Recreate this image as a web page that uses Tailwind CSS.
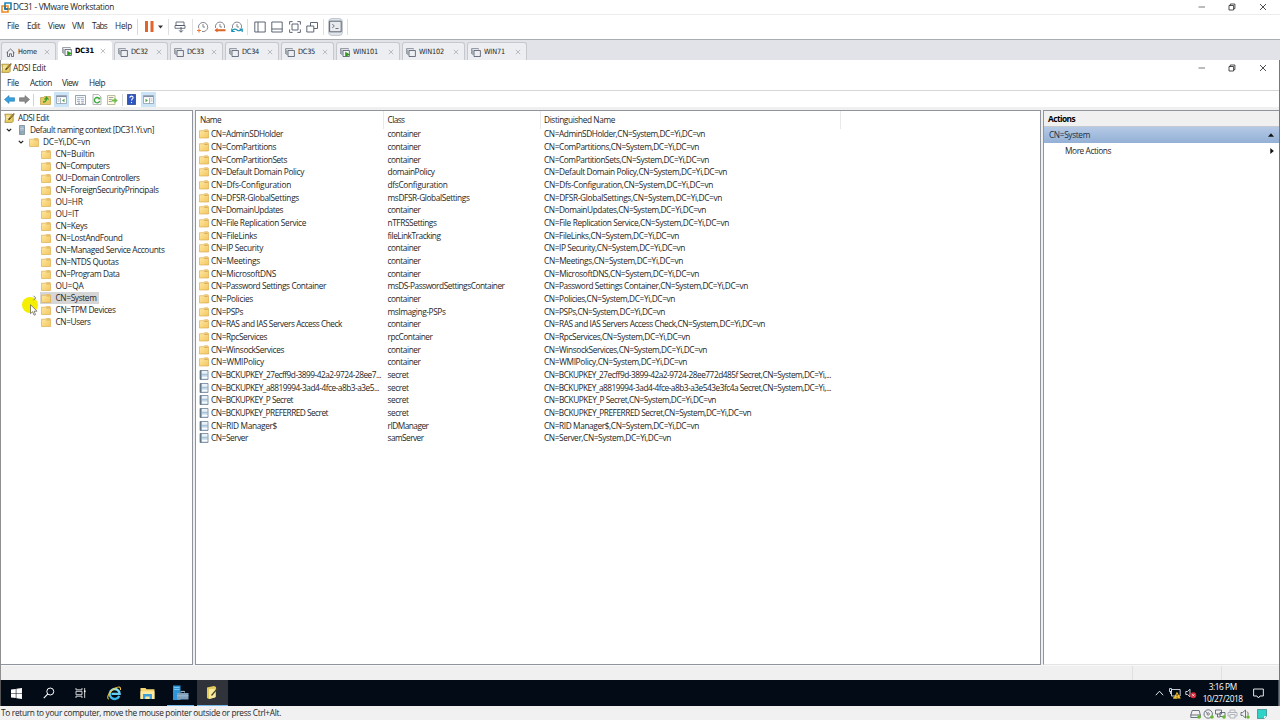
<!DOCTYPE html>
<html lang="en">
<head>
<meta charset="utf-8">
<title>DC31 - VMware Workstation</title>
<script src="https://cdn.jsdelivr.net/npm/@tailwindcss/browser@4"></script>
</head>
<body class="w-[1280px] h-[720px] overflow-hidden bg-white text-[#262626] font-['Open_Sans','Noto_Sans',sans-serif] text-[8.3px] leading-none whitespace-nowrap">
<svg class="absolute size-0">
  <defs>
    <linearGradient id="gf" x1="0" y1="0" x2="1" y2="1"><stop offset="0" stop-color="#ffe9a6"/><stop offset="1" stop-color="#f3c75e"/></linearGradient>
    <linearGradient id="ie" x1="0" y1="0" x2="0" y2="1"><stop offset="0" stop-color="#8fe6fb"/><stop offset="1" stop-color="#35b5e8"/></linearGradient>
  </defs>
  <symbol id="folder" viewBox="0 0 10 9"><path d="M.5 1.2H4.8l.5-.9h3.6l.6.9V8.5H.5z" fill="url(#gf)" stroke="#d6a544" stroke-width=".6"/><path d="M5.4 1.9h3.3" stroke="#b8873a" stroke-width=".6"/></symbol>
  <symbol id="leaf" viewBox="0 0 10 10"><path d="M1 .5h8v9H1z" fill="#d5e6f1" stroke="#6d8195" stroke-width=".8"/><path d="M1.8.5v9" stroke="#5c6f82" stroke-width="1.4"/><path d="M3 2h5.4M3 7.6h5.4" stroke="#fff" stroke-width="1"/><path d="M3 4.8h5.4" stroke="#8fadc8" stroke-width=".9"/></symbol>
  <symbol id="adsi" viewBox="0 0 11 10"><path d="M.8 1.2h7.4l1 1v6.2l-1 1H.8l.8-4z" fill="#e8cf63" stroke="#8b6d1c" stroke-width=".6"/><path d="M2 3h4M2 4.6h3M2 6.2h2.4" stroke="#fff8cf" stroke-width=".7"/><path d="M10.2.6 4.6 6.8" stroke="#4b3d1f" stroke-width="1.4"/><path d="M10.2.6 6 5.2" stroke="#d89a3c" stroke-width=".7"/></symbol>
  <symbol id="server" viewBox="0 0 6 10"><path d="M.5.5h5v9h-5z" fill="#8fa5b8" stroke="#5d7083" stroke-width=".6"/><path d="M1.2 2h3.6M1.2 3.5h3.6M1.2 5h3.6" stroke="#e4edf4" stroke-width=".6"/><circle cx="4" cy="8" r=".6" fill="#9fe06b"/></symbol>
  <symbol id="down" viewBox="0 0 6 6"><path d="M.8 1.8 3 4l2.2-2.2" fill="none" stroke="#222" stroke-width="1.2"/></symbol>
  <symbol id="vm" viewBox="0 0 10 9"><path d="M.6 6V.6h6.8v.8M1.800 7V1.800" fill="none" stroke="#666d78" stroke-width=".7"/><path d="M3 2.500h6.400v6H3z" fill="#eceef2" stroke="#4d5666" stroke-width=".8"/></symbol>
  <symbol id="vmon" viewBox="0 0 10 9"><path d="M.6 6V.6h7.800v.8M1.800 7V1.800" fill="none" stroke="#666d78" stroke-width=".7"/><path d="M3 2.500h6.400v6H3z" fill="#f4f6f8" stroke="#4d5666" stroke-width=".8"/><path d="M5.200 3.800 10 6.400 5.200 9z" fill="#2d9a1e"/></symbol>
  <symbol id="x" viewBox="0 0 6 6"><path d="m.8.8 4.400 4.400M5.200.8.8 5.200" stroke="#a4a6ab" stroke-width=".7"/></symbol>
  <symbol id="min" viewBox="0 0 8 8"><path d="M.5 4h6.500" stroke="#555" stroke-width=".8"/></symbol>
  <symbol id="restore" viewBox="0 0 8 8"><path d="M1 2.500h4.600V7H1zM2.300 2.300V1h4.600v4.700H5.800" fill="none" stroke="#222" stroke-width=".8"/></symbol>
  <symbol id="close" viewBox="0 0 8 8"><path d="m1 1 6 6M7 1 1 7" stroke="#222" stroke-width=".8"/></symbol>
</svg>

<!-- VMware title bar -->
<header class="h-[15px] flex items-center pl-0.5 border-b border-[#ececec]">
  <svg class="size-[11px] -ml-px mr-px" viewBox="0 0 11 11"><path d="M4 1h6v6H4z" fill="none" stroke="#1c86b5" stroke-width="1.600"/><path d="M1 4h6v6H1z" fill="none" stroke="#f08a1d" stroke-width="1.600"/><path d="M4 3.200V7h3.200" fill="none" stroke="#1c6f9b" stroke-width="1.400"/></svg>
  <span class="w-[1185px]" data-w="101">DC31 - VMware Workstation</span>
  <svg class="size-2"><use href="#min"/></svg><svg class="size-2 ml-[22px]"><use href="#restore"/></svg><svg class="size-2 ml-[23px]"><use href="#close"/></svg>
</header>

<!-- VMware menu and toolbar -->
<nav class="h-[25px] flex items-center pl-[7px] pb-px border-b border-[#a9adb0]">
  <span class="w-5" data-w="12">File</span><span class="w-[21px]" data-w="13">Edit</span><span class="w-6" data-w="17">View</span><span class="w-5" data-w="12">VM</span><span class="w-[23px]" data-w="15">Tabs</span><span class="w-[22px]" data-w="17">Help</span>
  <i class="w-px h-4 bg-[#d9d9d9]"></i>
  <svg class="w-[9px] h-[11px] ml-[7px]" viewBox="0 0 9 11"><path d="M0 0h3v11H0zM5.500 0h3v11h-3z" fill="#e0642b"/></svg>
  <svg class="w-[5px] h-1 ml-1" viewBox="0 0 5 4"><path d="M0 .5h5L2.500 3.500z" fill="#333"/></svg>
  <i class="w-px h-4 bg-[#e0e0e0] ml-[5px]"></i>
  <svg class="size-3 ml-[5px]" viewBox="0 0 12 12"><path d="M2 1h8v3.500H2zM1 4.500h10v2.800H1z" fill="#fff" stroke="#4d5666" stroke-width=".8"/><path d="M7 6v5M5 9.300l2 2 2-2" fill="none" stroke="#4d5666" stroke-width=".9"/></svg>
  <i class="w-px h-4 bg-[#e0e0e0] ml-1.5"></i>
  <svg class="size-3 ml-1" viewBox="0 0 12 12"><path d="M1.600 7A4.600 4.600 0 1 1 5 10.500M6 3v3.100h2" fill="none" stroke="#646b75" stroke-width=".8"/><path d="M2 7.500v4M0 9.500h4" stroke="#e77a3f" stroke-width="1.100"/></svg>
  <svg class="size-3 ml-[5px]" viewBox="0 0 12 12"><path d="M1.600 7A4.600 4.600 0 1 1 10.400 7M6 3v3h2" fill="none" stroke="#646b75" stroke-width=".8"/><path d="m.5 9.200 3-2.400v1.500h8v1.900h-8v1.400z" fill="#dc6424"/></svg>
  <svg class="size-3 ml-[5px]" viewBox="0 0 12 12"><path d="M1.600 7A4.600 4.600 0 1 1 10.400 7M6 3v3h2" fill="none" stroke="#646b75" stroke-width=".8"/><path d="M.8 7.500v3h3M1 10.200c1.500-2.600 3.500-2.400 5-1.200s3.500 1 5-1.200M11.200 11V8H8.500" fill="none" stroke="#1e8fb5" stroke-width="1.200"/></svg>
  <i class="w-px h-4 bg-[#e0e0e0] ml-1"></i>
  <svg class="size-3 ml-[6px]" viewBox="0 0 12 12"><path d="M.8 1h10.400v10H.8zM4 1v10" fill="none" stroke="#4d5666" stroke-width=".9"/></svg>
  <svg class="size-3 ml-[5px]" viewBox="0 0 12 12"><path d="M.8 1h10.400v10H.8zM.8 8h10.400" fill="none" stroke="#4d5666" stroke-width=".9"/></svg>
  <svg class="size-3 ml-[6px]" viewBox="0 0 12 12"><path d="M.6 3.600v-3h3M8.400.6h3v3M11.400 8.400v3h-3M3.600 11.400h-3v-3M3 3h6v6H3z" fill="none" stroke="#4d5666" stroke-width=".9"/></svg>
  <svg class="size-3 ml-[5px]" viewBox="0 0 12 12"><path d="M4.500 5V1.500h7v6H8M.8 5h7v6h-7z" fill="none" stroke="#4d5666" stroke-width=".9"/></svg>
  <i class="w-px h-4 bg-[#e0e0e0] ml-[5px]"></i>
  <span class="w-[15px] h-[18px] ml-1 bg-[#dfe3ea] border border-[#c3c8d0] rounded-sm flex items-center justify-center"><svg class="size-[13px] shrink-0" viewBox="0 0 13 13"><path d="M.6 1.200h11.600v10.600H.6z" fill="#e9ebef" stroke="#4d5666" stroke-width=".9"/><path d="m3.300 4 2 2-2 2M6.500 8.500h3" fill="none" stroke="#4d5666" stroke-width=".8"/></svg></span>
  <i class="w-px h-4 bg-[#e0e0e0] ml-1"></i>
</nav>

<!-- Virtual machine tabs -->
<div id="tabs" class="h-5 flex items-end gap-0.5 bg-[#e1e3e8] pl-px font-['DejaVu_Sans_Condensed','DejaVu_Sans',sans-serif] text-[7.3px]"></div>

<!-- Remote desktop of the machine -->
<main class="h-[620px] border-l border-r border-l-[#8f8f8f] border-r-[#777] bg-[#f0f0f0] relative">
  <div class="h-[17px] pb-px bg-white flex items-center">
    <svg class="w-[11px] h-2.5 mr-px"><use href="#adsi"/></svg>
    <span class="w-[1185px]" data-w="33">ADSI Edit</span>
    <svg class="size-2"><use href="#min"/></svg><svg class="size-2 ml-[22px]"><use href="#restore"/></svg><svg class="size-2 ml-[23px]"><use href="#close"/></svg>
  </div>
  <div class="h-[14px] bg-white flex items-center pl-1.5 border-b border-[#d6d6d6]">
    <span class="w-[23px]" data-w="12">File</span><span class="w-[32px]" data-w="22">Action</span><span class="w-[27px]" data-w="16">View</span><span data-w="16">Help</span>
  </div>
  <div class="h-4 bg-white flex items-center pl-[3px] pt-px">
    <svg class="w-[11px] h-[9px]" viewBox="0 0 11 9"><path d="M.5 4.500 5 .6v2.200h5.500v3.400H5v2.200z" fill="#36a3e0" stroke="#2478b0" stroke-width=".6"/></svg>
    <svg class="w-[11px] h-[9px] ml-[4px]" viewBox="0 0 11 9"><path d="M10.500 4.500 6 .6v2.200H.5v3.400H6v2.200z" fill="#8b8b8b" stroke="#666" stroke-width=".6"/></svg>
    <i class="w-px h-3 bg-[#d4d4d4] ml-[3px]"></i>
    <svg class="w-[11px] h-[10px] ml-[6px]" viewBox="0 0 11 10"><path d="M.5 2.500h3l1-1h6v8H.5z" fill="#e6c865" stroke="#b39138" stroke-width=".6"/><path d="M3 7c2 0 3.500-1 3.500-3.500M4.500 4.600l2-2.400 2 2.400" fill="none" stroke="#35a02c" stroke-width="1.300"/></svg>
    <span class="w-[15px] h-[15px] ml-[3px] bg-[#cce4f7] flex items-center justify-center"><svg class="w-[11px] h-[9px]" viewBox="0 0 11 9"><path d="M.5.5h10v8H.5z" fill="#fff" stroke="#8292a4" stroke-width=".7"/><path d="M.5 1.500h10" stroke="#8292a4" stroke-width="1.200"/><path d="M4.500 3v5.500M1.500 4h2M1.500 6h2" stroke="#8292a4" stroke-width=".7"/><path d="M8.500 3.800v3.400L6 5.500z" fill="#4ea53e"/></svg></span>
    <svg class="w-[11px] h-[10px] ml-[6px]" viewBox="0 0 11 10"><path d="M.5.5h10v9H.5z" fill="#f7f8fa" stroke="#7e8b99" stroke-width=".8"/><path d="M2 2.600h7M2 4.600h3M6 4.600h3M2 6.400h3M6 6.400h3" stroke="#8fa1b8" stroke-width=".8"/><path d="M3 8.200h2M6.500 8.200h2" stroke="#666" stroke-width=".7"/></svg>
    <svg class="w-[10px] h-[11px] ml-[6px]" viewBox="0 0 10 11"><path d="M1 .5h5.500L9 3v7.500H1z" fill="#fbfbfb" stroke="#9a9a9a" stroke-width=".7"/><path d="M7.300 4.600A2.700 2.700 0 1 0 7.700 7" fill="none" stroke="#38a838" stroke-width="1.300"/><path d="m5.600 5.300 2.800.300V2.900z" fill="#38a838"/></svg>
    <svg class="w-[11px] h-[10px] ml-[5px]" viewBox="0 0 11 10"><path d="M.5.5H8v9H.5z" fill="#fffbe0" stroke="#a4a17c" stroke-width=".7"/><path d="M1.800 2.500h4.500M1.800 4.500h3M1.800 6.500h3" stroke="#889" stroke-width=".8"/><path d="M4.800 4.500h2.700V2.700L10.800 5.500 7.500 8.200V6.500H4.800z" fill="#6bc04b"/></svg>
    <i class="w-px h-3 bg-[#d4d4d4] ml-1"></i>
    <svg class="w-[9px] h-[11px] ml-[4px]" viewBox="0 0 9 11"><path d="M.4.400h8.200v10.200H.4z" fill="#2f55c0" stroke="#1d377e" stroke-width=".7"/><path d="M2.900 3.700c0-2.200 3.400-2 3.200 0-.1 1.200-1.600 1.300-1.600 2.900M4.500 7.900v1.200" fill="none" stroke="#fff" stroke-width="1.100"/></svg>
    <span class="w-[15px] h-[15px] ml-[5px] bg-[#cce4f7] flex items-center justify-center"><svg class="w-[11px] h-[9px]" viewBox="0 0 11 9"><path d="M.5.500h10v8H.5z" fill="#fff" stroke="#8292a4" stroke-width=".7"/><path d="M.5 1.500h10" stroke="#8292a4" stroke-width="1.200"/><path d="M6.500 3v5.500M7.500 4h2M7.500 6h2" stroke="#8292a4" stroke-width=".7"/><path d="M2.500 3.800v3.400L5 5.500z" fill="#4ea53e"/></svg></span>
  </div>

  <div class="h-[558px] pt-[3px] flex gap-[2px]">
    <section id="tree" class="w-[192px] h-[555px] bg-white border border-l-0 border-[#8f949d] pt-px"></section>
    <section class="w-[846px] h-[555px] bg-white border border-[#8f949d]">
      <div class="h-[17px] flex items-center leading-[18px]">
        <span class="w-[188px] pl-1 border-r border-[#e9e9e9]"><b class="font-normal" data-w="21">Name</b></span>
        <span class="w-[157px] pl-[3.500px] border-r border-[#e9e9e9]"><b class="font-normal" data-w="17">Class</b></span>
        <span class="w-[300px] pl-[3px] border-r border-[#e9e9e9]"><b class="font-normal" data-w="71">Distinguished Name</b></span>
      </div>
      <div id="list"></div>
    </section>
    <section class="w-[236px] h-[555px] bg-white border border-r-0 border-[#8f949d] border-b-[#e4e4e4]">
      <div class="h-[16px] bg-[#f0f0f0] border-b border-[#c5cad2] flex items-center pl-[4px] pt-px font-bold text-black"><span data-w="27" data-font="bold 8.3px 'Open Sans'">Actions</span></div>
      <div class="h-4 bg-linear-to-b from-[#b4c9e5] to-[#94b0d6] flex items-center justify-between pl-[5px] pr-[5px] text-[#222e3e]"><span data-w="41">CN=System</span><svg class="w-1.5 h-1" viewBox="0 0 6 4"><path d="M0 3.800h6L3 .3z" fill="#111"/></svg></div>
      <div class="h-4 flex items-center justify-between pl-[21px] pr-[5px]"><span data-w="46">More Actions</span><svg class="w-1 h-1.5" viewBox="0 0 4 6"><path d="M.3 0v6L3.800 3z" fill="#111"/></svg></div>
    </section>
  </div>

  <div class="h-[15px] flex justify-end border-t border-[#f8f8f8]"><i class="w-[89px] border-l border-[#e0e0e0]"></i><i class="w-[58px] border-l border-[#e0e0e0]"></i></div>

  <!-- Pointer with its highlight -->
  <div class="absolute left-[21px] top-[237px] size-4 rounded-full bg-[#f4ee00]"></div>
  <svg class="absolute left-[31px] top-[235px] size-[6px]" viewBox="0 0 6 6"><path d="M1.500.800 3.700 3 1.500 5.200" fill="none" stroke="#666" stroke-width=".9"/></svg>
  <svg class="absolute left-[29px] top-[244px] w-2 h-3" viewBox="0 0 8 12"><path d="M.5.700v9l2.100-2 1.500 3.500 1.400-.600L4.100 7.200H7z" fill="#fff" stroke="#555" stroke-width=".7"/></svg>
</main>

<!-- Windows taskbar -->
<div class="h-[26px] bg-[#030b16] border-l border-r border-l-[#555] border-r-[#777] flex items-center text-white">
  <svg class="size-[11px] ml-[10px]" viewBox="0 0 11 11"><path d="M0 1.600 4.800.900v4.300H0zM5.400.800 11 0v5.200H5.400zM0 5.800h4.800v4.300L0 9.400zM5.400 5.800H11V11l-5.600-.800z" fill="#fff"/></svg>
  <svg class="size-3 ml-[21px]" viewBox="0 0 12 12"><circle cx="7.300" cy="4.500" r="3.500" fill="none" stroke="#fff"/><path d="M4.800 7 .8 11.200" stroke="#fff" stroke-width="1.100"/></svg>
  <svg class="size-3 ml-5" viewBox="0 0 12 12"><path d="M1 1v1.800h6V1M1 11V9.200h6V11M1 4.300h6v3.400H1zM9.700 1v10" fill="none" stroke="#e8e8e8" stroke-width=".9"/><path d="M9 3.500h1.600v1.600H9z" fill="#fff"/></svg>
  <svg class="w-[15px] h-[15px] ml-5" viewBox="0 0 15 15"><path d="M12.300 10A5 5 0 1 1 12.700 7.800H4.500" fill="none" stroke="url(#ie)" stroke-width="2.300"/><path d="M1.600 13.400C-1 11 3 5 7.500 2.500S14 .600 13.500 4" fill="none" stroke="#f2c53b" stroke-width="1.100"/></svg>
  <svg class="w-[15px] h-[13px] ml-[18px]" viewBox="0 0 15 13"><path d="M.500 1h5l1 1.300h8V12H.500z" fill="#f8d673"/><path d="M.500 4.300h14V12H.500z" fill="#fde9a0"/><path d="M3 12V7h9v5H9.700V9.500H5.300V12z" fill="#3ba0dc"/></svg>
  <span class="w-[27px] h-[26px] ml-3 border-b border-[#76b9ed] flex items-center justify-center"><svg class="w-[17px] h-4" viewBox="0 0 17 16"><path d="M1 .500h7.500V15H1z" fill="#2c96d8"/><path d="M2 2.500h5.500M2 4.500h5.500" stroke="#8dd0f5" stroke-width=".8"/><path d="M9 7.500V6.400h3.500v1.100" fill="none" stroke="#a9bfd0"/><path d="M5 8h11.500v6.500H5z" fill="#7f9fbb"/><path d="M5 10.800h11.500" stroke="#b9cedd" stroke-width=".6"/></svg></span>
  <span class="w-[32px] h-[26px] ml-[3px] bg-[#30343a] border-b border-[#76b9ed] flex items-center justify-center"><svg class="w-[13px] h-[15px]" viewBox="0 0 13 15"><path d="M1 2.500 8 1l2 1v10l-7 2-2-1z" fill="#e3c95a"/><path d="M3 4h6v8.500L3 14z" fill="#f7ea9f"/><path d="M12.300 2.500 5.500 10.500" stroke="#4a4425" stroke-width="1.200"/></svg></span>
  <svg class="w-[9px] h-[6px] ml-[927px]" viewBox="0 0 9 6"><path d="M.800 5.200 4.500 1.200l3.700 4" fill="none" stroke="#fff" stroke-width=".9"/></svg>
  <svg class="w-[12px] h-[11px] ml-[5px]" viewBox="0 0 12 11"><path d="M2.500 1.500h8.700V8H2.500zM4 10h4M.500.500h2v3h-2zM1.500 3.500V6" fill="none" stroke="#dfe5ea" stroke-width=".9"/><path d="M8 3.800 11.800 10.600H4.400z" fill="#f8bf2c"/><path d="M8.100 6v2.300M8.100 9v.8" stroke="#222" stroke-width=".8"/></svg>
  <svg class="w-[12px] h-[11px] ml-[4px]" viewBox="0 0 12 11"><path d="M.800 3.500h1.700L5 1.200v7.600L2.500 6.500H.800z" fill="none" stroke="#fff" stroke-width=".8"/><circle cx="8.300" cy="7.300" r="3" fill="#dc2633"/><path d="m7.200 6.200 2.200 2.200m0-2.200L7.200 8.400" stroke="#fff" stroke-width=".8"/></svg>
  <div class="w-[51px] flex flex-col items-center leading-[12.500px]"><span data-w="28">3:16 PM</span><span data-w="40">10/27/2018</span></div>
  <svg class="w-[11px] h-[11px] ml-[5px]" viewBox="0 0 11 11"><path d="M.600 1h9.800v7H7L5.500 10 4 8H.600z" fill="none" stroke="#fff" stroke-width=".9"/></svg>
  <i class="w-px h-[26px] ml-[14px] bg-[#4b525b]"></i>
</div>

<!-- VMware status bar -->
<footer class="h-[14px] bg-[#f1f1f1] flex items-center pl-px pt-px">
  <span class="w-[1189px]" data-w="280">To return to your computer, move the mouse pointer outside or press Ctrl+Alt.</span>
  <svg class="w-[11px] h-[10px]" viewBox="0 0 11 10"><path d="M2.200 1.500h7L10.300 6v2.500H.8V6zM.8 6h9.500" fill="none" stroke="#4d5666" stroke-width=".8"/><circle cx="9" cy="8" r="1.800" fill="#66b82e"/></svg>
  <svg class="w-[11px] h-[10px] ml-0.5" viewBox="0 0 11 10"><circle cx="5.200" cy="5" r="4.200" fill="none" stroke="#4d5666" stroke-width=".8"/><circle cx="5.200" cy="5" r="1.200" fill="none" stroke="#4d5666" stroke-width=".7"/><path d="M2.500 2.500 4.300 4" stroke="#4d5666" stroke-width=".8"/><circle cx="9" cy="8" r="1.800" fill="#66b82e"/></svg>
  <svg class="w-[11px] h-[10px] ml-px" viewBox="0 0 11 10"><path d="M.5 1h6v4h-6zM5 3.500h5v4H5zM2.500 5v3H5" fill="none" stroke="#4d5666" stroke-width=".8"/><circle cx="9" cy="8" r="1.800" fill="#66b82e"/></svg>
  <svg class="w-[11px] h-[10px] ml-px" viewBox="0 0 11 10"><path d="M3 3.500V1h5v2.500M3 7H1V3.500h9V7H8M3 5.500h5V9H3z" fill="none" stroke="#a2a8b1" stroke-width=".8"/></svg>
  <svg class="w-[11px] h-[10px] ml-0.5" viewBox="0 0 11 10"><path d="M1 3.500h1.700L5.500 1v8L2.700 6.500H1zM7 2.500c1 1 1.300 2 1 3.500" fill="none" stroke="#4d5666" stroke-width=".8"/><circle cx="8" cy="8" r="1.700" fill="#66b82e"/></svg>
  <svg class="w-[10px] h-[10px] ml-[6px]" viewBox="0 0 10 10"><path d="M.4.400h9.200v6.800L7 9.600H.4z" fill="#2fd3c5" stroke="#287c7c" stroke-width=".7"/><path d="M9.600 7.200H7v2.400z" fill="#fff"/></svg>
</footer>

<script>
const tabs = [["Home",55,"home",19],["DC31",54,"vmon",19],["DC32",54,"vm",17],["DC33",53,"vm",17],["DC34",54,"vm",17],["DC35",53,"vm",17],["WIN101",64,"vmon",25],["WIN102",63,"vm",25],["WIN71",60,"vm",21]];
document.getElementById("tabs").innerHTML = tabs.map(([n,w,ic,tw],i)=>
 `<div class="${i==1 ? "h-[19px] flex items-center pl-1 pr-[5px] rounded-t-[3px] border border-b-0 border-white bg-white font-bold text-black" : "h-[18px] pt-px flex items-center pl-1 pr-[5px] rounded-t-[3px] border border-b-0 border-[#c6c8ce] bg-[#eceef1]"}" style="width:${w}px">` +
 (ic=="home" ? `<svg class="size-[9px]" viewBox="0 0 9 9"><path d="M.5 4.800 4.500 1l4 3.800M1.500 4v4.500h2V5.800h2v2.700h2V4" fill="none" stroke="#4d5666" stroke-width=".8"/></svg>` : `<svg class="w-[10px] h-[9px] -ml-px"><use href="#${ic}"/></svg>`) +
 `<span class="ml-[3px]" data-w="${tw}" data-font="${i==1?"bold ":""}7.3px 'DejaVu Sans Condensed','DejaVu Sans'">${n}</span><svg class="size-1.5 ml-auto"><use href="#x"/></svg></div>`).join("");

const tree = ["CN=Builtin:39","CN=Computers:54","OU=Domain Controllers:84","CN=ForeignSecurityPrincipals:103","OU=HR:27","OU=IT:23","CN=Keys:32","CN=LostAndFound:67","CN=Managed Service Accounts:109","CN=NTDS Quotas:63","CN=Program Data:64","OU=QA:28","CN=System:41","CN=TPM Devices:60","CN=Users:35"];
document.getElementById("tree").innerHTML =
 `<div class="h-3 flex items-center pl-[3px]"><svg class="w-[11px] h-2.5"><use href="#adsi"/></svg><span class="ml-[3px]" data-w="31">ADSI Edit</span></div>
  <div class="h-3 flex items-center pl-[5px]"><svg class="size-[6px]"><use href="#down"/></svg><svg class="w-1.5 h-2.5 ml-[7px]"><use href="#server"/></svg><span class="ml-[5px]" data-w="124">Default naming context [DC31.Yi.vn]</span></div>
  <div class="h-3 flex items-center pl-[17px]"><svg class="size-[6px]"><use href="#down"/></svg><svg class="w-2.5 h-[9px] ml-[5px]"><use href="#folder"/></svg><span class="ml-1" data-w="47">DC=Yi,DC=vn</span></div>` +
 tree.map(t=>{const [n,w]=t.split(":");return `<div class="h-3 flex pl-[39px]"><div class="${n=="CN=System" ? "flex items-center pl-px pr-[2px] bg-[#d6d6d6]" : "flex items-center pl-px pr-[2px]"}"><svg class="w-2.5 h-[9px]"><use href="#folder"/></svg><span class="ml-[4.500px]" data-w="${w}">${n}</span></div></div>`}).join("");

const S=",CN=System,DC=Yi,DC=vn";
const rows=[["AdminSDHolder",72,"container",33,161],["ComPartitions",65,"container",33,155],["ComPartitionSets",76,"container",33,165],["Default Domain Policy",93,"domainPolicy",47,183],["Dfs-Configuration",80,"dfsConfiguration",60,169],["DFSR-GlobalSettings",88,"msDFSR-GlobalSettings",82,178],["DomainUpdates",72,"container",33,162],["File Replication Service",95,"nTFRSSettings",49,185],["FileLinks",46,"fileLinkTracking",53,135],["IP Security",52,"container",33,141],["Meetings",49,"container",33,139],["MicrosoftDNS",65,"container",33,155],["Password Settings Container",115,"msDS-PasswordSettingsContainer",117,204],["Policies",42,"container",33,131],["PSPs",32,"msImaging-PSPs",58,121],["RAS and IAS Servers Access Check",131,"container",33,221],["RpcServices",56,"rpcContainer",45,146],["WinsockServices",73,"container",33,163],["WMIPolicy",53,"container",33,143],
["BCKUPKEY_27ecff9d-3899-42a2-9724-28ee7...",170,"secret",21,287,"CN=BCKUPKEY_27ecff9d-3899-42a2-9724-28ee772d485f Secret,CN=System,DC=Yi,..."],["BCKUPKEY_a8819994-3ad4-4fce-a8b3-a3e5...",168,"secret",21,287,"CN=BCKUPKEY_a8819994-3ad4-4fce-a8b3-a3e543e3fc4a Secret,CN=System,DC=Yi,..."],["BCKUPKEY_P Secret",82,"secret",21,172],["BCKUPKEY_PREFERRED Secret",117,"secret",21,207],["RID Manager$",66,"rIDManager",41,155],["Server",37,"samServer",36,127]];
document.getElementById("list").innerHTML = rows.map(([n,w,c,cw,dw,full],i)=>
 `<div class="h-[12.675px] flex items-center"><div class="w-[188px] pl-[3px] flex items-center"><svg class="w-2.5 h-[10px]"><use href="${i<19?"#folder":"#leaf"}"/></svg><span class="ml-0.5" data-w="${w}">CN=${n}</span></div><div class="w-[156px] pl-[3.5px]"><span data-w="${cw}">${c}</span></div><div class="pl-1"><span data-w="${dw}">${full||"CN="+n+S}</span></div></div>`).join("");

const pen=document.createElement("canvas").getContext("2d");
document.querySelectorAll("[data-w]").forEach(e=>{
  pen.font=e.dataset.font||"8.3px 'Open Sans'";
  e.style.letterSpacing=((e.dataset.w-pen.measureText(e.textContent).width)/e.textContent.length)+"px";
});
</script>
</body>
</html>
